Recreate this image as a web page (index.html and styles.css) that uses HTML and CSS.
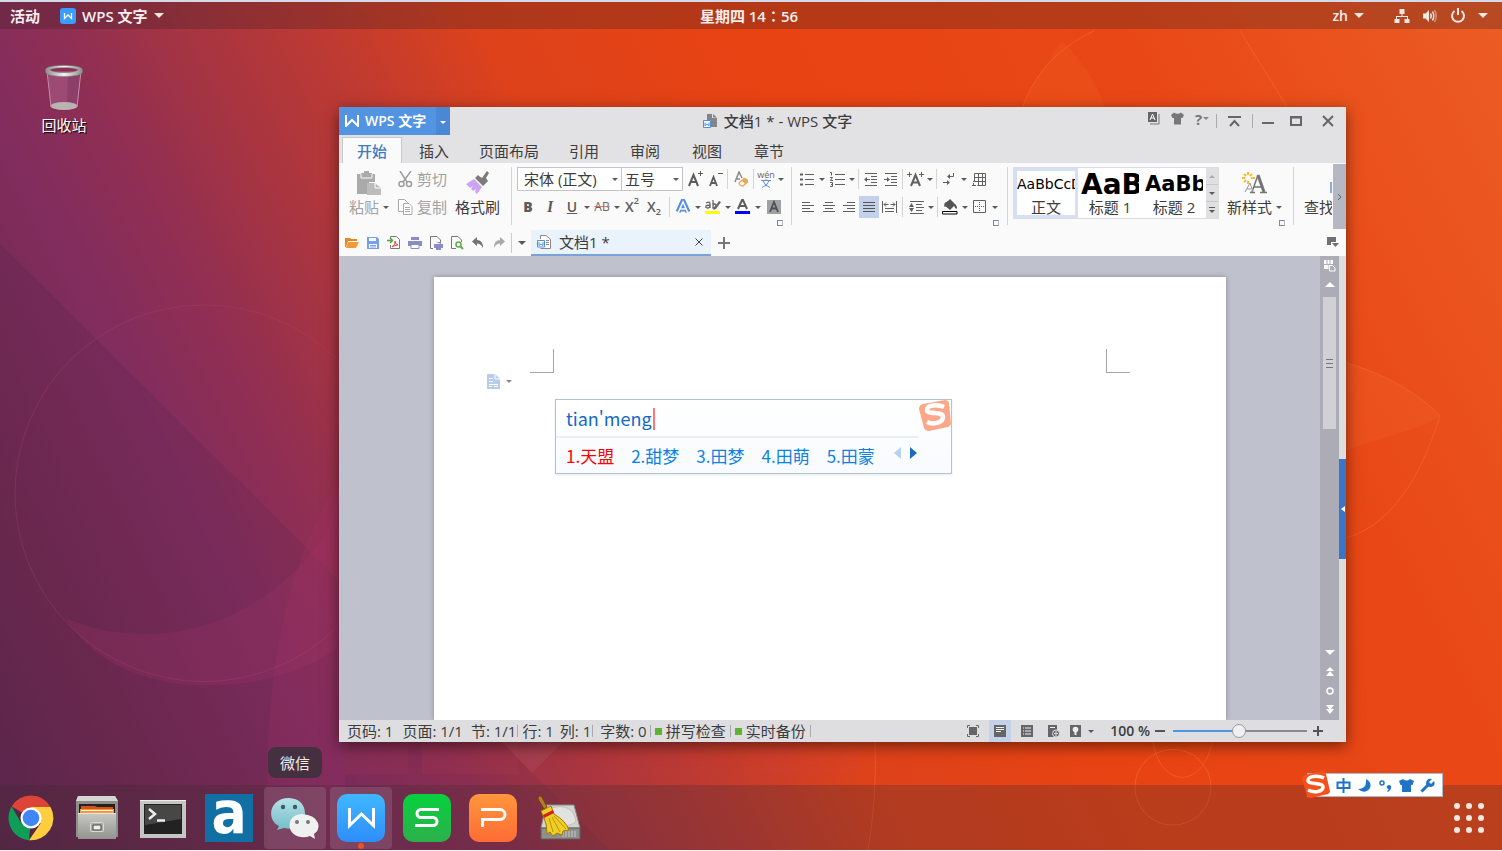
FILE: index.html
```html
<!DOCTYPE html>
<html lang="zh-CN">
<head>
<meta charset="utf-8">
<title>文档1 * - WPS 文字</title>
<link rel="stylesheet" href="styles.css">
</head>
<body class="desktop">
<svg class="wallpaper" viewBox="0 0 1502 851" preserveAspectRatio="none" aria-hidden="true">
  <defs>
    <linearGradient id="wall" gradientUnits="userSpaceOnUse" x1="-356" y1="180" x2="1193" y2="-603">
      <stop offset="0" stop-color="#5c264c"/><stop offset=".1" stop-color="#70294f"/><stop offset=".2" stop-color="#822d5e"/>
      <stop offset=".265" stop-color="#932f51"/><stop offset=".3" stop-color="#a03346"/><stop offset=".388" stop-color="#be3a32"/>
      <stop offset=".47" stop-color="#dd421b"/><stop offset=".6" stop-color="#e84313"/><stop offset=".8" stop-color="#e94816"/><stop offset="1" stop-color="#ec5c24"/>
    </linearGradient>
    <linearGradient id="shade" x1="0" y1="0" x2="1" y2="0"><stop offset="0" stop-color="#4c2148" stop-opacity=".22"/><stop offset="1" stop-color="#4c2148" stop-opacity=".08"/></linearGradient>
  </defs>
  <rect width="1502" height="851" fill="url(#wall)"/>
  <path d="M0 242L610 851H0z" fill="url(#shade)"/>
  <path d="M65 618C150 655 260 630 325 535L345 470V640C300 690 130 720 65 618z" fill="#a8356b" fill-opacity=".2"/>
  <path d="M345 470C280 570 262 690 268 851H345z" fill="#a8306b" fill-opacity=".2"/>
  <circle cx="204" cy="493" r="189" fill="none" stroke="#b5476a" stroke-opacity=".3"/>
  <path d="M345 740V775H408V740zM422 740V775H518V740zM760 740V775H860V740z" fill="#d04050" fill-opacity=".1"/>
  <path d="M500 740L532 774L565 740z" fill="#fff" fill-opacity=".05"/>
  <path d="M1062 40C1040 70 1028 90 1022 107H1106C1095 80 1080 55 1062 40z" fill="#ff7a30" fill-opacity=".12"/>
  <path d="M1022 107C1035 70 1060 45 1094 29M1240 29L1288 107M1346 362C1390 375 1420 395 1440 415C1420 480 1390 525 1346 538M875 742Q877 800 868 851M1153 742C1160 790 1204 790 1212 742" fill="none" stroke="#ff8a3c" stroke-opacity=".3"/>
  <path d="M1346 362C1390 375 1420 395 1440 415C1420 430 1390 434 1346 450z" fill="#ff8a50" fill-opacity=".1"/>
  <circle cx="1173" cy="788" r="38" fill="none" stroke="#ff8a3c" stroke-opacity=".35"/>
</svg>

<header class="topbar">
  <div class="topbar-side">
    <button class="panel-btn">活动</button>
    <button class="panel-btn app-menu">
      <svg width="16" height="16" viewBox="0 0 16 16"><rect width="16" height="16" rx="3" fill="#3a9dfc"/><path d="M4.500 5V10.500L8 7L11.500 10.500V5" fill="none" stroke="#fff" stroke-width="1.300"/></svg>
      WPS 文字 <i class="tri tri-lg"></i></button>
  </div>
  <button class="panel-btn clock">星期四 14∶56</button>
  <div class="topbar-side topbar-right">
    <button class="panel-btn lang">zh <i class="tri tri-lg"></i></button>
    <button class="panel-btn tray" aria-label="系统">
      <svg width="16" height="16" viewBox="0 0 16 16" fill="#f1e8e4"><path d="M5.500 1h5v5H8.500v2H14v3H15.500v4H10.500V11H13V9H3v2H5.500v4H.5V11H2V8H7.500V6H5.500z"/></svg>
      <svg width="16" height="16" viewBox="0 0 16 16"><path d="M1 5.500H3.500L7 2V14L3.500 10.500H1z" fill="#f1e8e4"/><path d="M8.500 5.500Q10 8 8.500 10.500M10.500 3.500Q13 8 10.500 12.500" stroke="#f1e8e4" stroke-width="1.500" fill="none"/><path d="M12.500 2Q16 8 12.500 14" stroke="#f1e8e4" stroke-opacity=".45" stroke-width="1.500" fill="none"/></svg>
      <svg width="16" height="16" viewBox="0 0 16 16" fill="none" stroke="#f1e8e4" stroke-width="2"><path d="M4.500 3A6 6 0 1 0 11.500 3M8 0V7"/></svg>
      <i class="tri tri-lg"></i></button>
  </div>
</header>

<main class="space">
  <a class="trash" href="#trash">
    <svg width="42" height="48" viewBox="0 0 42 48">
      <defs><linearGradient id="rim" x1="0" x2="1"><stop offset="0" stop-color="#8b8c88"/><stop offset=".5" stop-color="#f3f4f0"/><stop offset="1" stop-color="#8b8c88"/></linearGradient></defs>
      <path d="M4 8L8 44Q21 49 34 44L38 8z" fill="#a04f7a" fill-opacity=".85"/><path d="M25 12L24 44Q31 45 34 43L38 10z" fill="#7c335c" fill-opacity=".5"/>
      <ellipse cx="21" cy="43" rx="13.500" ry="4" fill="#b9b4b2"/><path d="M4 8L8 44M38 8L34 44" stroke="#c78ba8" stroke-width="1" fill="none"/>
      <path fill-rule="evenodd" d="M2.500 6.500C2.500 1 39.500 1 39.500 6.500V9C39.500 15 2.500 15 2.500 9zM7 6.700C10 10.500 32 10.500 35 6.700C31 4 11 4 7 6.700z" fill="url(#rim)" stroke="#777" stroke-width=".5"/>
    </svg>
    <span>回收站</span>
  </a>

  <section class="window">
    <div class="titlebar">
      <div class="brand"><button class="brand-main"><svg width="14" height="12" viewBox="0 0 14 12"><path d="M1 0V11L7 5L13 11V0" fill="none" stroke="#fff" stroke-width="2"/></svg>WPS 文字</button><button class="brand-drop" aria-label="菜单"><i class="tri"></i></button></div>
      <h1 class="title"><svg width="15" height="15" viewBox="0 0 15 15"><path d="M4 0H9V4H14V13H8V6H4z" fill="#858585"/><path d="M10 0L14 3.500H10z" fill="#858585"/><path d="M.5 6.500H7.500V13.500H.5z" fill="#fff" stroke="#4a8fe0"/><path d="M2 8.500V12L4 10L6 12V8.500" fill="none" stroke="#4a8fe0"/></svg>文档1 * - WPS 文字</h1>
      <div class="win-tools">
        <button class="tool" aria-label="字体"><svg width="13" height="13" viewBox="0 0 13 13"><path d="M1 0H10V10H1z" fill="#666"/><path d="M3 12H12V2" fill="none" stroke="#777"/><path d="M3 8L5.500 2L8 8M4 6H7" stroke="#fff" fill="none"/></svg></button>
        <button class="tool" aria-label="皮肤"><svg width="13" height="13" viewBox="0 0 13 13"><path d="M3 0.500Q6.500 3 10 .5L13 3L11.500 6H10V12.500H3V6H1.500L0 3z" fill="#777"/></svg></button>
        <button class="tool help" aria-label="帮助"><b>?</b><i class="tri tri-sm"></i></button>
        <i class="vline"></i>
        <button class="tool fold" aria-label="折叠"><svg width="13" height="11" viewBox="0 0 13 11" fill="none" stroke="#666" stroke-width="2"><path d="M0 1H13M2 10L6.500 5L11 10"/></svg></button>
        <i class="vline"></i>
        <button class="tool win" aria-label="最小化"><svg width="12" height="12" viewBox="0 0 12 12"><path d="M0 8H12" stroke="#666" stroke-width="2"/></svg></button>
        <button class="tool win" aria-label="最大化"><svg width="12" height="12" viewBox="0 0 12 12"><path d="M1 2H11V10H1z" fill="none" stroke="#666" stroke-width="2"/><path d="M0 2.500H12" stroke="#666" stroke-width="2"/></svg></button>
        <button class="tool win close" aria-label="关闭"><svg width="12" height="12" viewBox="0 0 12 12"><path d="M1 1L11 11M11 1L1 11" stroke="#666" stroke-width="2"/></svg></button>
      </div>
    </div>
    <nav class="tabs">
      <button class="tab tab-on">开始</button><button class="tab">插入</button><button class="tab">页面布局</button><button class="tab">引用</button><button class="tab">审阅</button><button class="tab">视图</button><button class="tab">章节</button>
    </nav>

    <div class="ribbon">
      <div class="group clip">
        <button class="big off paste"><svg width="26" height="25" viewBox="0 0 26 25"><path d="M1 3H5V2H8V0H13V2H16V3H19V11H13V23H1z" fill="#aaa"/><path d="M5 3V7H16V3" fill="none" stroke="#fafafa"/><path d="M11 12H19L25 17V24H11z" fill="#bcbcbc"/><path d="M19 12V17H25" fill="none" stroke="#fff"/></svg><span>粘贴<i class="tri"></i></span></button>
        <div class="stack">
          <button class="line off"><svg width="15" height="17" viewBox="0 0 15 17" fill="none" stroke="#9d9d9d" stroke-width="1.500"><path d="M2 0L9 11M13 0L5 11" /><circle cx="3.500" cy="13" r="2.500"/><circle cx="11" cy="13" r="2.500"/></svg>剪切</button>
          <button class="line off"><svg width="15" height="16" viewBox="0 0 15 16" fill="#fff" stroke="#aaa"><path d="M.5 12.500V.5H6.500L9.500 3.500V12.500z"/><path d="M5.500 15.500V4.500H11L14 7.500V15.500zM7 8.500H12M7 10.500H12M7 12.500H12"/></svg>复制</button>
        </div>
        <button class="big painter"><svg width="24" height="24" viewBox="0 0 24 24"><path d="M13 5L16 7L21 0L23 2L20 7L22 10L17 15L9 7L12 4z" fill="#7b7b7b"/><path d="M8 8L16 16L11 23L9 21L10 18L7 20L5 18L7 15L4 17L0 13z" fill="#cda4f2"/></svg><span>格式刷</span></button>
      </div>
      <i class="gline"></i>
      <div class="group font-group">
        <div class="row">
          <span class="combo combo-font"><select aria-label="字体"><option>宋体 (正文)</option></select><i class="tri"></i></span><span class="combo combo-size"><select aria-label="字号"><option>五号</option></select><i class="tri"></i></span>
          <button class="c20" aria-label="增大字号"><svg width="16" height="18" viewBox="0 0 16 18"><path d="M1 16L5.500 5L10 16M2.500 12H8.500" fill="none" stroke="#5c5c5c" stroke-width="2"/><path d="M10 3.500H15M12.500 1V6" stroke="#5c5c5c"/></svg></button>
          <button class="c20" aria-label="减小字号"><svg width="16" height="18" viewBox="0 0 16 18"><path d="M2 16L5.500 7L9 16M3 13H8" fill="none" stroke="#5c5c5c" stroke-width="1.800"/><path d="M10 3.500H15" stroke="#5c5c5c"/></svg></button>
          <i class="sep"></i>
          <button class="c22" aria-label="清除格式"><svg width="15" height="16" viewBox="0 0 15 16"><path d="M1 11L5 1L8 7M3 8H6" fill="none" stroke="#888" stroke-width="1.500"/><path d="M5 12L10 7.500Q14 8 13.500 11L9 15Q5.500 15 5 12z" fill="#fff" stroke="#eaa65c" stroke-width="1.300"/><path d="M8 10L10 7.500Q14 8 13.500 11L11 13z" fill="#eaa65c"/></svg></button>
          <i class="sep"></i>
          <button class="c20 wen" aria-label="拼音指南"><small>wén</small><svg width="10" height="9" viewBox="0 0 10 9"><path d="M0 1.500H10M5 0V1.500M2 2Q4 7 9 8.500M8 2Q6 7 1 8.500" stroke="#5f8fdc" fill="none"/></svg></button><button class="arr" aria-label="更多"><i class="tri"></i></button>
        </div>
        <div class="row">
          <button class="c22 glyph"><b>B</b></button><button class="c22 glyph serif"><em>I</em></button><button class="c22 glyph"><u>U</u></button><button class="arr a8" aria-label="更多"><i class="tri"></i></button>
          <button class="c22 strike">AB</button><button class="arr a8" aria-label="更多"><i class="tri"></i></button>
          <button class="c22 glyph script">X<sup>2</sup></button><button class="c22 glyph script">X<sub>2</sub></button><i class="sep s8"></i>
          <button class="c20" aria-label="文字效果"><svg width="16" height="16" viewBox="0 0 16 16" fill="none"><path d="M3 13L8 2L13 13M5 10H11" stroke="#5a8de0" stroke-width="5" stroke-linejoin="round"/><path d="M3 14L8 3L13 14M5 10H11" stroke="#fff" stroke-width="1.500"/></svg></button><button class="arr" aria-label="更多"><i class="tri"></i></button>
          <button class="c20" aria-label="突出显示"><svg width="16" height="16" viewBox="0 0 16 16"><path d="M1 4Q5 2 5 5V9M5 6Q0 6 1 8.500Q4 10 5 7M8 1V9Q11 9 11 6Q10 4 8 6" fill="none" stroke="#666" stroke-width="1.300"/><path d="M9 9L14 2L16 3L11 10L8 11z" fill="#666"/><path d="M0 12H15V15H0z" fill="#ff0"/></svg></button><button class="arr" aria-label="更多"><i class="tri"></i></button>
          <button class="c20" aria-label="字体颜色"><svg width="16" height="16" viewBox="0 0 16 16"><path d="M3 10L7.500 0L12 10M5 7H10" fill="none" stroke="#5c5c5c" stroke-width="2"/><path d="M0 12H15V15H0z" fill="#00f"/></svg></button><button class="arr" aria-label="更多"><i class="tri"></i></button>
          <button class="c22" aria-label="字符底纹"><svg width="14" height="14" viewBox="0 0 14 14"><path d="M0 0H14V14H0z" fill="#9fa1a6"/><path d="M3 12L7 2L11 12M4.500 8.500H9.500" fill="none" stroke="#505050" stroke-width="1.800"/></svg></button>
        </div>
        <button class="launch" aria-label="字体设置"></button>
      </div>
      <i class="gline"></i>
      <div class="group para-group">
        <div class="row">
          <button class="c20" aria-label="项目符号"><svg width="15" height="15" viewBox="0 0 15 15" stroke="#606060"><path d="M5 2.500H14M5 7.500H14M5 12.500H14"/><path d="M0 2.500H3M0 7.500H3M0 12.500H3" stroke-width="2"/></svg></button><button class="arr" aria-label="更多"><i class="tri"></i></button>
          <button class="c20" aria-label="编号"><svg width="15" height="17" viewBox="0 0 15 17" stroke="#606060" fill="none"><path d="M5 3.500H15M5 8.500H15M5 13.500H15M0 1.500H1.500V4.500M0 6.500H2.500L.5 9.500H3M0 11.500H2.500V15.500H0M1 13.500H2"/></svg></button><button class="arr" aria-label="更多"><i class="tri"></i></button>
          <i class="sep"></i>
          <button class="c20" aria-label="减少缩进"><svg width="14" height="14" viewBox="0 0 14 14" stroke="#606060"><path d="M1 1.500H13M7 4.500H13M7 7.500H13M7 10.500H13M1 13.500H13M1 7.500H6"/><path d="M0 7.500L3 5V10z" fill="#606060" stroke="none"/></svg></button>
          <button class="c20" aria-label="增加缩进"><svg width="14" height="14" viewBox="0 0 14 14" stroke="#606060"><path d="M1 1.500H13M7 4.500H13M7 7.500H13M7 10.500H13M1 13.500H13M0 7.500H4"/><path d="M6 7.500L3 5V10z" fill="#606060" stroke="none"/></svg></button>
          <i class="sep"></i>
          <button class="c20" aria-label="中文版式"><svg width="17" height="16" viewBox="0 0 17 16"><path d="M4 15L8.500 4L13 15M5.500 11.500H11.500" fill="none" stroke="#606060" stroke-width="2"/><path d="M0 3.500H5M12 3.500H17M2.500 1V6M14.500 1V6" stroke="#606060" fill="none"/></svg></button><button class="arr" aria-label="更多"><i class="tri"></i></button>
          <i class="sep"></i>
          <button class="c20" aria-label="换行标记"><svg width="12" height="14" viewBox="0 0 12 14" stroke="#606060" fill="none"><path d="M10.500 1V4.500H5M0 10.500H5"/><path d="M4 4.500L7 2V7zM7 10.500L4 8V13z" fill="#606060" stroke="none"/></svg></button><button class="arr" aria-label="更多"><i class="tri"></i></button>
          <button class="c20" aria-label="表格"><svg width="15" height="15" viewBox="0 0 15 15" stroke="#606060" fill="none"><path d="M2.500 1.500H13.500V13.500H5.500M2.500 1.500V9M6.500 1.500V13.500M10.500 1.500V13.500M2.500 5.500H13.500M1 9.500H13.500M0 13.500H4M1.500 11V14"/></svg></button>
        </div>
        <div class="row">
          <button class="c22" aria-label="左对齐"><svg width="12" height="14" viewBox="0 0 12 14" stroke="#606060"><path d="M0 2.500H8M0 5.500H12M0 8.500H8M0 11.500H12"/></svg></button>
          <button class="c20" aria-label="居中"><svg width="12" height="14" viewBox="0 0 12 14" stroke="#606060"><path d="M2 2.500H10M0 5.500H12M2 8.500H10M0 11.500H12"/></svg></button>
          <button class="c20" aria-label="右对齐"><svg width="12" height="14" viewBox="0 0 12 14" stroke="#606060"><path d="M4 2.500H12M0 5.500H12M4 8.500H12M0 11.500H12"/></svg></button>
          <button class="c20 on" aria-label="两端对齐"><svg width="12" height="14" viewBox="0 0 12 14" stroke="#555"><path d="M0 2.500H12M0 5.500H12M0 8.500H12M0 11.500H12"/></svg></button>
          <button class="c20" aria-label="分散对齐"><svg width="15" height="14" viewBox="0 0 15 14" stroke="#606060" fill="none"><path d="M.5 1V13M14.500 1V13M3 8.500H12M3 11.500H12M2 4.500H6.500M8.500 4.500H13M4 2.500L2 4.500L4 6.500M11 2.500L13 4.500L11 6.500"/></svg></button>
          <i class="sep s6"></i>
          <button class="c20" aria-label="行距"><svg width="15" height="15" viewBox="0 0 15 15" stroke="#606060"><path d="M1 1.500H15M7 4.500H13M7 7.500H15M7 10.500H13M1 13.500H15"/><path d="M0 7L2.500 3L5 7zM0 8L2.500 12L5 8z" fill="#606060" stroke="none"/></svg></button><button class="arr" aria-label="更多"><i class="tri"></i></button>
          <i class="sep"></i>
          <button class="c20" aria-label="底纹"><svg width="16" height="16" viewBox="0 0 16 16"><path d="M2 6L8 0L14 6Q16 9 14 10L12 7L8 11z" fill="#555"/><path d="M3 8V4Q7 1 10 4" stroke="#555" fill="none"/><path d="M.5 12.500H15V15H.5z" fill="#fff" stroke="#000"/></svg></button><button class="arr" aria-label="更多"><i class="tri"></i></button>
          <button class="c20" aria-label="边框"><svg width="14" height="14" viewBox="0 0 14 14" fill="none" stroke="#606060"><path d="M.5 .5H12.500V12.500H.5z"/><path d="M2 6.500H12M6.500 2V12" stroke-dasharray="1 1"/></svg></button><button class="arr" aria-label="更多"><i class="tri"></i></button>
        </div>
        <button class="launch" aria-label="段落设置"></button>
      </div>
      <i class="gline"></i>
      <div class="group styles-group">
        <div class="gallery">
          <button class="style style-on"><span class="demo">AaBbCcD</span><span class="style-name">正文</span></button>
          <button class="style"><span class="demo demo-h1">AaB</span><span class="style-name">标题 1</span></button>
          <button class="style"><span class="demo demo-h2">AaBb</span><span class="style-name">标题 2</span></button>
          <div class="gal-nav"><button aria-label="上"><i class="tri tri-up"></i></button><button aria-label="下"><i class="tri"></i></button><button aria-label="全部"><i class="tri tri-bar"></i></button></div>
        </div>
        <button class="big new-style"><svg width="26" height="24" viewBox="0 0 26 24"><path d="M10 21L16 4M12 16H20M8 21.500H13M18 21.500H25" fill="none" stroke="#747474" stroke-width="1.500"/><path d="M16 4L22 21" stroke="#747474" stroke-width="3"/><path d="M3 21L8 12L11 21M5 18H9" fill="none" stroke="#999"/><path d="M6 1V4M6 10V13M0 7H3M9 7H13M2 3L4 5M10 3L8 5M2 11L4 9" stroke="#fdb92e" stroke-width="2"/></svg><span>新样式<i class="tri"></i></span></button>
        <button class="launch" aria-label="样式设置"></button>
      </div>
      <i class="gline"></i>
      <button class="find"><i class="find-mark"></i><span>查找</span></button>
      <button class="expand" aria-label="展开"><svg width="5" height="8" viewBox="0 0 5 8"><path d="M1 1L4 4L1 7" stroke="#666" fill="none"/></svg></button>
    </div>

    <div class="docbar">
      <div class="quick">
        <button aria-label="打开"><svg width="14" height="14" viewBox="0 0 14 14"><path d="M0 2H5L6 3H12V5H3L1 11H0z" fill="#e98420"/><path d="M3 6H14L11 12H1z" fill="#f79838"/></svg></button>
        <button aria-label="保存"><svg width="14" height="14" viewBox="0 0 14 14"><path d="M1 1H11L13 3V13H1z" fill="#76a1ea"/><path d="M3 2H10V5H3zM3 8H11V12H3z" fill="#fff"/><path d="M4 9.500H10M4 11H10" stroke="#76a1ea"/></svg></button>
        <button aria-label="PDF"><svg width="14" height="14" viewBox="0 0 14 14" fill="none"><path d="M3.500 3V.5H9.500L12.500 3.500V12.500H3.500V9" stroke="#777"/><path d="M0 4.500H5M3 2L5.500 4.500L3 7" stroke="#50a83c" stroke-width="1.500"/><path d="M5 11Q9 8 8 5Q8 8 11 9Q8 9 5 11" stroke="#e04444"/></svg></button>
        <button aria-label="打印"><svg width="14" height="14" viewBox="0 0 14 14"><path d="M3 1H11V4H3zM0 5H14V10H0z" fill="#8b8bc8"/><path d="M3 8.500H11V12.500H3z" fill="#fff" stroke="#8b8bc8"/></svg></button>
        <button aria-label="直接打印"><svg width="14" height="14" viewBox="0 0 14 14" fill="none"><path d="M4 12.500H1.500V.5H8L11.500 4V6" stroke="#777"/><path d="M5 8H14V12H5zM7 6H12V8M7 11H12V14H7z" fill="#8b8bc8"/></svg></button>
        <button aria-label="打印预览"><svg width="14" height="14" viewBox="0 0 14 14" fill="none"><path d="M6 12.500H1.500V.5H8L11.500 4V6" stroke="#777"/><circle cx="8.500" cy="8.500" r="2.500" stroke="#66a850" stroke-width="1.500"/><path d="M10 10L13 13" stroke="#66a850" stroke-width="2"/></svg></button>
        <button aria-label="撤销"><svg width="14" height="14" viewBox="0 0 14 14"><path d="M1 5.500L6 1V4Q12 4 12 12Q10 7.500 6 7.500V10z" fill="#737373"/></svg></button>
        <button aria-label="恢复"><svg width="14" height="14" viewBox="0 0 14 14"><path d="M13 5.500L8 1V4Q2 4 2 12Q4 7.500 8 7.500V10z" fill="#a9a9a9"/></svg></button>
      </div>
      <i class="dline"></i>
      <button class="quick-more" aria-label="更多"><i class="tri tri-md"></i></button>
      <div class="doc-tab"><svg width="14" height="14" viewBox="0 0 14 14" fill="none"><path d="M3.500 4V.5H9L13.500 4.500V13.500H3.500" stroke="#888" fill="#fff"/><path d="M9 5.500H12M9 7.500H12M9 9.500H12" stroke="#888"/><path d="M.5 5.500H7.500V12H.5z" fill="#fff" stroke="#4a8fe0"/><path d="M2 7V10.500L4 9L6 10.500V7" stroke="#4a8fe0"/></svg><span>文档1 *</span><button class="doc-close" aria-label="关闭文档"><svg width="8" height="8" viewBox="0 0 8 8"><path d="M.5 .5L7.500 7.500M7.500 .5L.5 7.500" stroke="#444"/></svg></button></div>
      <button class="doc-add" aria-label="新建"><svg width="12" height="12" viewBox="0 0 12 12"><path d="M0 6H12M6 0V12" stroke="#777" stroke-width="2"/></svg></button>
      <button class="doc-list" aria-label="文档列表"><svg width="12" height="11" viewBox="0 0 12 11"><path d="M0 0H9V5H4V8H0z" fill="#707070"/><path d="M5 6H12L8.500 10z" fill="#707070"/></svg></button>
    </div>

    <div class="work">
      <div class="canvas">
        <div class="page">
          <i class="corner corner-l"></i><i class="corner corner-r"></i>
          <button class="para-mark" aria-label="段落"><svg width="13" height="15" viewBox="0 0 13 15"><path d="M0 0H8L13 5V15H0z" fill="#b7cbea"/><path d="M8 0V5H13M2 4.500H6M2 7.500H6M2 10.500H11M2 12.500H5M7 12.500H11" fill="none" stroke="#fff"/></svg><i class="tri tri-sm"></i></button>
        </div>
      </div>
      <div class="scroll">
        <button aria-label="导航"><svg width="12" height="12" viewBox="0 0 12 12"><path d="M0 0H9V4H5V9H0z" fill="#fff"/><path d="M3 0V4M6 0V4M0 4.500H5M5 4V9" stroke="#abacb5"/><path d="M5.500 5.500H8.500L11 8V11H5.500z" fill="#abacb5" stroke="#fff"/></svg></button>
        <button aria-label="上滚"><svg width="10" height="5"><path d="M0 5L5 0L10 5z" fill="#fff"/></svg></button>
        <div class="thumb"><i></i><i></i><i></i></div>
        <span class="scroll-fill"></span>
        <button aria-label="下滚"><svg width="10" height="5"><path d="M0 0H10L5 5z" fill="#fff"/></svg></button>
        <button aria-label="上一页"><svg width="8" height="9"><path d="M0 4L4 0L8 4zM0 9L4 4L8 9z" fill="#fff"/></svg></button>
        <button aria-label="选择对象"><svg width="8" height="8"><circle cx="4" cy="4" r="3" fill="none" stroke="#fff" stroke-width="1.500"/></svg></button>
        <button aria-label="下一页"><svg width="8" height="9"><path d="M0 0H8L4 5zM0 4H8L4 9z" fill="#fff"/></svg></button>
      </div>
      <div class="edge"><button class="edge-tab" aria-label="任务窗格"><svg width="4" height="6"><path d="M4 0V6L0 3z" fill="#fff"/></svg></button></div>
    </div>

    <footer class="status">
      <span class="st st-a">页码: 1</span><span class="st st-b">页面: 1/1</span><span class="st">节: 1/1</span><i class="sline"></i><span class="st st-c">行: 1</span><span class="st">列: 1</span><i class="sline"></i><span class="st st-d">字数: 0</span><i class="sline"></i>
      <button class="st st-btn"><i class="led"></i>拼写检查</button><i class="sline"></i><button class="st st-btn"><i class="led"></i>实时备份</button><i class="sline"></i>
      <div class="views">
        <button aria-label="全屏"><svg width="12" height="12" viewBox="0 0 12 12"><path d="M2 2H10V10H2z" fill="#666"/><path d="M.5 3V.5H3M9 .5H11.500V3M11.500 9V11.500H9M3 11.500H.5V9" stroke="#666" fill="none"/></svg></button>
        <button class="on" aria-label="页面视图"><svg width="12" height="12" viewBox="0 0 12 12"><path d="M0 0H12V12H0z" fill="#666"/><path d="M2 2.500H10M2 4.500H10M2 6.500H7" stroke="#eee"/></svg></button>
        <button aria-label="大纲"><svg width="12" height="12" viewBox="0 0 12 12"><path d="M0 0H12V12H0z" fill="#666"/><path d="M2 3H3M4 3H10M2 6H3M4 6H10M2 9H3M4 9H10" stroke="#eee"/></svg></button>
        <button aria-label="Web 版式"><svg width="12" height="12" viewBox="0 0 12 12"><path d="M0 0H9V12H0z" fill="#666"/><path d="M2 2.500H7" stroke="#eee"/><circle cx="8" cy="8.500" r="3.500" fill="#666" stroke="#ddd"/><path d="M6 8.500H10M8 6V11" stroke="#ddd"/></svg></button>
        <button class="eye" aria-label="护眼"><svg width="12" height="12" viewBox="0 0 12 12"><path d="M0 0H11V12H0z" fill="#666"/><circle cx="5.500" cy="4.500" r="2.800" fill="#eee"/><path d="M4.500 7H6.500V10H4.500z" fill="#eee"/></svg><i class="tri"></i></button>
      </div>
      <label class="pct" for="zoom">100 %</label>
      <button class="zbtn" aria-label="缩小"><svg width="10" height="10"><path d="M0 5H10" stroke="#555" stroke-width="2"/></svg></button>
      <input class="zoom" id="zoom" type="range" min="0" max="100" value="49">
      <button class="zbtn" aria-label="放大"><svg width="10" height="10"><path d="M0 5H10M5 0V10" stroke="#555" stroke-width="2"/></svg></button>
    </footer>

    <div class="ime">
      <div class="ime-top"><input class="ime-input" value="tian'meng" aria-label="拼音"></div>
      <div class="ime-list"><button class="cand cand-on">1.天盟</button><button class="cand">2.甜梦</button><button class="cand">3.田梦</button><button class="cand">4.田萌</button><button class="cand">5.田蒙</button><button class="pg" aria-label="上页"><svg width="7" height="12"><path d="M7 0V12L0 6z" fill="#b5d3ee"/></svg></button><button class="pg" aria-label="下页"><svg width="7" height="12"><path d="M0 0V12L7 6z" fill="#1b6cc0"/></svg></button></div>
      <svg class="ime-logo" width="32" height="31" viewBox="0 0 32 31"><path d="M4 4L26 0Q29 0 30 3L32 24Q31 26 29 27L10 31Q6 31 5 28L0 9Q0 5 4 4z" fill="#fba88a"/><path d="M25 7C18 4 8 5 8 10C8 15 24 11 24 17C24 23 14 25 8 22" fill="none" stroke="#fff" stroke-width="4.500"/></svg>
    </div>
  </section>

  <div class="imebar">
    <svg class="imebar-logo" width="28" height="28" viewBox="0 0 28 28"><path d="M3 4L20 0Q23 0 24 3L28 20Q28 22 26 23L9 27Q6 27 5 25L0 8Q0 5 3 4z" fill="#f4511c"/><path d="M22 7C16 4 6 5 6 9.500C6 14 21 11 21 16C21 21 12 22 6 19" fill="none" stroke="#fff" stroke-width="3.500"/></svg>
    <button aria-label="中文"><svg width="15" height="15" viewBox="0 0 15 15"><path d="M1.500 4.500H13.500V10H1.500zM7.500 0V15" fill="none" stroke="#1f74c8" stroke-width="2"/></svg></button>
    <button aria-label="半角"><svg width="15" height="15" viewBox="0 0 15 15"><path d="M9 1Q15 4 13 10Q8 17 1 11Q10 11 9 1z" fill="#1f74c8"/></svg></button>
    <button aria-label="标点"><svg width="15" height="15" viewBox="0 0 15 15"><circle cx="4" cy="5" r="2" fill="none" stroke="#1f74c8" stroke-width="1.500"/><path d="M9 8Q11 6 13 8Q14 11 10 14L9 13Q11 12 10.500 11Q8 10 9 8z" fill="#1f74c8"/></svg></button>
    <button aria-label="皮肤"><svg width="15" height="15" viewBox="0 0 15 15"><path d="M4 1Q7.500 4 11 1L15 3L13.500 7H12V14H3V7H1.500L0 3z" fill="#1f74c8"/></svg></button>
    <button aria-label="工具"><svg width="15" height="15" viewBox="0 0 15 15"><path d="M1.500 13.500L8 7" stroke="#1f74c8" stroke-width="3"/><path d="M12 1L9 4L11 6L14 3Q16 8 11 9Q7 9 6 6Q6 0 12 1z" fill="#1f74c8"/></svg></button>
  </div>
  <div class="tip">微信</div>
</main>

<nav class="dock">
  <a href="#chrome" class="app" aria-label="Chrome"><svg width="48" height="48" viewBox="0 0 48 48"><path d="M24 24L4.700 12.500A22.300 22.300 0 0 1 43.500 13H24z" fill="#db4437"/><path d="M24 24L22 46.200A22.300 22.300 0 0 1 4.700 12.500L14.500 29.500z" fill="#0f9d58"/><path d="M24 13H43.500A22.300 22.300 0 0 1 22 46.200L33.500 29.500z" fill="#ffcd40"/><circle cx="24" cy="24" r="10.500" fill="#fff"/><circle cx="24" cy="24" r="8.300" fill="#4285f4"/></svg></a>
  <a href="#files" class="app" aria-label="文件"><svg width="48" height="48" viewBox="0 0 48 48"><defs><linearGradient id="cab" x1="0" y1="0" x2="0" y2="1"><stop offset="0" stop-color="#c8c8c4"/><stop offset="1" stop-color="#92928e"/></linearGradient></defs><path d="M5 2H42L45 7V43H3V7z" fill="#8e8e8a"/><path d="M5 2H42L45 7H3z" fill="#d5d5d1"/><path d="M6 10H42V20H6z" fill="#222"/><path d="M8 12H22L24 13H40V20H8z" fill="#d5521a"/><path d="M7 15H41V20H7z" fill="#f49a3e"/><path d="M8 16.500H40" stroke="#fff0d8"/><path d="M5 19H43V45H5z" fill="url(#cab)"/><path d="M5 19.500H43" stroke="#e6e6e3"/><rect x="17.500" y="28.500" width="13" height="9" rx="1" fill="#a9a9a5" stroke="#dadad7"/><path d="M20 31H28V36H20z" fill="#eee" stroke="#444"/></svg></a>
  <a href="#terminal" class="app" aria-label="终端"><svg width="48" height="48" viewBox="0 0 48 48"><path d="M1 6H47V44H1z" fill="#c5c5c3"/><path d="M1 6.500H47" stroke="#eee"/><path d="M5 10H43V40H5z" fill="#222"/><path d="M6 11H42V25L6 31z" fill="#464746"/><path d="M10 15L16 20L10 25M18 26.500H26" stroke="#eee" stroke-width="2.500" fill="none"/></svg></a>
  <a href="#a" class="app app-a"><span>a</span></a>
  <a href="#wechat" class="app app-on" aria-label="微信"><svg width="48" height="48" viewBox="0 0 48 48"><defs><linearGradient id="wx" x1="0" y1="0" x2="0" y2="1"><stop offset="0" stop-color="#b4e2e6"/><stop offset="1" stop-color="#74bcca"/></linearGradient></defs><path d="M18 4C-2 4-5 26 8 32L6 36L13 34Q34 38 34 19Q33 5 18 4z" fill="url(#wx)"/><circle cx="12" cy="13" r="2.200" fill="#3a5a68"/><circle cx="24" cy="13" r="2.200" fill="#3a5a68"/><path d="M31 20C15 20 14 41 30 43Q34 44 39 42L44 45L43 40Q49 36 47 29Q44 21 31 20z" fill="#eef1ef"/><circle cx="26" cy="28" r="2" fill="#777"/><circle cx="37" cy="28" r="2" fill="#777"/></svg></a>
  <a href="#writer" class="app app-on app-run" aria-label="WPS 文字"><svg width="48" height="48" viewBox="0 0 48 48"><defs><linearGradient id="bl" x1="0" y1="0" x2="0" y2="1"><stop offset="0" stop-color="#3fb8ff"/><stop offset="1" stop-color="#2f8dfc"/></linearGradient></defs><rect width="48" height="48" rx="10" fill="url(#bl)"/><path d="M12.500 14V31.500L24.500 20L36.500 31.500V14" fill="none" stroke="#fff" stroke-width="3"/></svg></a>
  <a href="#sheet" class="app" aria-label="WPS 表格"><svg width="48" height="48" viewBox="0 0 48 48"><defs><linearGradient id="gr" x1="0" y1="0" x2="0" y2="1"><stop offset="0" stop-color="#06d13d"/><stop offset="1" stop-color="#2cb04c"/></linearGradient></defs><rect width="48" height="48" rx="10" fill="url(#gr)"/><path d="M36 15.500H18A4 4 0 0 0 18 23.500H30A4 4 0 0 1 30 31.500H12" fill="none" stroke="#fff" stroke-width="3"/></svg></a>
  <a href="#slides" class="app" aria-label="WPS 演示"><svg width="48" height="48" viewBox="0 0 48 48"><defs><linearGradient id="or" x1="0" y1="0" x2="0" y2="1"><stop offset="0" stop-color="#ff963c"/><stop offset="1" stop-color="#ff6c35"/></linearGradient></defs><rect width="48" height="48" rx="10" fill="url(#or)"/><path d="M12 15.500H31A5 5 0 0 1 31 25.500H13.500V33" fill="none" stroke="#fff" stroke-width="3"/></svg></a>
  <a href="#clean" class="app" aria-label="清理"><svg width="48" height="48" viewBox="0 0 48 48"><path d="M11 11H39L45 34H6z" fill="#d3d3d1" stroke="#888"/><path d="M16 14Q38 8 41 28Q32 34 20 32" fill="#e2e2e0" stroke="#c0c0be"/><path d="M6 34H45V45H6z" fill="#8f8f8c" stroke="#5e5e5b"/><path d="M28 37V43M31 37V43M34 37V43M37 37V43M40 37V43" stroke="#ccc"/><path d="M3 5Q3 0 7 3L12 13L9 15z" fill="#b97a2a" stroke="#70450f"/><path d="M6 17L16 12L19 20Q31 27 34 36L28 37L27 41L22 39L18 42L15 38L12 40Q12 30 9 24z" fill="#f0cf25" stroke="#9d7c0a"/><path d="M8 21L18 16L19 19L9 24z" fill="#d32222"/><path d="M14 24L18 38M17 23L25 38M19 22L31 35" stroke="#b8940f" fill="none"/></svg></a>
  <button class="app grid-btn" aria-label="显示应用程序"><svg width="32" height="32" viewBox="0 0 32 32" fill="#f1e8e4"><circle cx="4" cy="4" r="3"/><circle cx="16" cy="4" r="3"/><circle cx="28" cy="4" r="3"/><circle cx="4" cy="16" r="3"/><circle cx="16" cy="16" r="3"/><circle cx="28" cy="16" r="3"/><circle cx="4" cy="28" r="3"/><circle cx="16" cy="28" r="3"/><circle cx="28" cy="28" r="3"/></svg></button>
</nav>
</body>
</html>
```

FILE: styles.css
```css
* { box-sizing: border-box; }
html, body { height: 100%; }
body, button, input, select {
  margin: 0;
  font: 15px/20px "Open Sans", "Noto Sans CJK SC", sans-serif;
  color: #3c3c3c;
}
button { padding: 0; border: 0; background: none; flex: none; white-space: nowrap; }
a { color: inherit; text-decoration: none; }
svg { display: block; flex: none; }

.desktop {
  position: relative;
  display: flex;
  flex-direction: column;
  min-height: 100vh;
  overflow: hidden;
  border-top: 2px solid #d5dae8;
  border-bottom: 1px solid #f0eef0;
}
.wallpaper { position: absolute; inset: 0; width: 100%; height: 100%; z-index: -1; }

.tri {
  display: inline-block;
  flex: none;
  border: 3px solid transparent;
  border-top-color: #5a5a5a;
  border-bottom: 0;
}
.tri-lg { border-width: 5px; border-bottom: 0; border-top-color: #f1e8e4; }
.tri-md { border-width: 4px; border-bottom: 0; }
.tri-sm { border-top-color: #888; }
.tri-up { border: 3px solid transparent; border-top: 0; border-bottom-color: #aaa; }

/* Top panel */
.topbar {
  display: grid;
  grid-template-columns: 1fr auto 1fr;
  height: 27px;
  flex: none;
  padding: 0 14px 0 10px;
  background: rgba(50, 30, 32, .28);
}
.topbar-side { display: flex; align-items: center; gap: 20px; }
.topbar-right { justify-content: flex-end; gap: 30px; }
.panel-btn { display: flex; align-items: center; gap: 6px; color: #f4efee; font-weight: 600; }
.lang { font-size: 14px; }
.tray { gap: 12px; }

/* Desktop surface */
.space { position: relative; flex: 1; }
.trash {
  position: absolute;
  left: 34px;
  top: 34px;
  width: 60px;
  display: flex;
  flex-direction: column;
  align-items: center;
  gap: 4px;
  color: #fff;
  text-shadow: 1px 1px 1px #000;
}

/* Window */
.window {
  position: absolute;
  left: 339px;
  right: 156px;
  top: 78px;
  bottom: 43px;
  display: flex;
  flex-direction: column;
  background: #fafafa;
  box-shadow: 0 4px 14px rgba(0, 0, 0, .5);
}
.titlebar {
  display: grid;
  grid-template-columns: 1fr auto 1fr;
  align-items: center;
  height: 28px;
  flex: none;
  background: #e2e2e4;
}
.brand { display: flex; align-self: stretch; }
.brand-main { display: flex; align-items: center; gap: 6px; width: 97px; padding-left: 6px; background: #5294e2; color: #fff; font-size: 14px; font-weight: 600; }
.brand-drop { width: 14px; background: #4a88d4; }
.brand .tri { border-top-color: #fff; vertical-align: middle; }
.title { display: flex; gap: 6px; align-items: center; margin: 0; padding-right: 130px; font-size: 15px; font-weight: 500; }
.win-tools { display: flex; align-items: center; justify-content: flex-end; margin-left: -130px; }
.tool { display: flex; align-items: center; justify-content: center; width: 24px; height: 28px; padding-bottom: 5px; }
.help { gap: 1px; width: 26px; }
.help b { color: #777; }
.fold { width: 33px; padding-bottom: 0; }
.vline { width: 1px; height: 14px; margin: 0 1px; background: #aaa; flex: none; }
.win { width: 28px; padding-bottom: 0; }
.close { width: 36px; }

.tabs { display: flex; height: 28px; flex: none; padding: 2px 0 0 3px; background: #e2e2e4; }
.tab { padding: 1px 15px 0; }
.tab:nth-child(n+5) { padding: 1px 16px 0; }
.tab-on { border: 1px solid #c8c8ca; border-bottom: 0; background: #fafafa; color: #3e7ac4; font-weight: 500; padding: 0 14px; margin-right: 2px; }

/* Ribbon */
.ribbon { display: flex; height: 66px; flex: none; overflow: hidden; background: #fafafa; }
.group { position: relative; display: flex; flex: none; height: 66px; }
.gline { width: 1px; height: 58px; margin-top: 4px; background: #d4d4d6; flex: none; }
.big { display: flex; flex-direction: column; align-items: center; justify-content: space-between; padding: 8px 0 12px; line-height: 20px; }
.big span { display: flex; align-items: center; gap: 4px; }
.off { color: #a2a2a2; }
.clip { width: 172px; padding-left: 10px; }
.stack { display: flex; flex-direction: column; padding: 2px 8px 0 9px; }
.line { display: flex; align-items: center; gap: 4px; height: 28px; }
.font-group, .para-group { flex-direction: column; padding: 2px 5px 0 5px; }
.para-group { padding-right: 7px; }
.row { display: flex; align-items: center; height: 28px; }
.row button { display: flex; align-items: center; justify-content: center; height: 22px; }
.row .c20 { width: 20px; }
.row .c22 { width: 22px; }
.row .arr { width: 10px; }
.row .a8 { width: 8px; }
.row .on { background: #c3d2ea; }
.sep { width: 1px; height: 20px; margin: 0 2px 0 1px; background: #d4d4d6; flex: none; }
.s6 { margin: 0 3px 0 3px; }
.s8 { margin: 0 3px 0 4px; }
.combo { position: relative; display: flex; align-items: center; height: 24px; border: 1px solid #c4c4c6; background: #fff; }
.combo-font { width: 105px; }
.combo-size { width: 62px; margin-left: -1px; margin-right: 3px; }
.combo select { appearance: none; width: 100%; height: 22px; padding: 0 0 0 6px; border: 0; background: none; }
.combo-size select { padding-left: 3px; }
.combo .tri { position: absolute; right: 3px; top: 10px; }
.glyph { font-size: 14px; color: #5c5c5c; font-weight: 600; }
.serif { font-family: "Liberation Serif", serif; font-size: 16px; }
.script sup, .script sub { font-size: 9px; line-height: 9px; align-self: flex-start; }
.script sub { align-self: flex-end; margin-bottom: 2px; }
.row .strike { font-size: 12px; color: #666; text-decoration: line-through #e66; }
.row .wen { flex-direction: column; }
.wen small { font-size: 9px; line-height: 9px; color: #666; }
.launch { position: absolute; right: 8px; bottom: 3px; width: 6px; height: 6px; border: 1px solid #7a86a4; border-right-color: #b4bccc; }
.styles-group { width: 285px; padding-left: 5px; }
.gallery { display: flex; width: 206px; height: 52px; margin-top: 4px; border: 1px solid #dcdcde; background: #fff; }
.style { display: flex; flex-direction: column; align-items: center; width: 64px; padding: 3px 3px 0; justify-content: flex-start; }
.style-on { box-shadow: inset 0 0 0 3px #d5e0f6; }
.demo { display: block; width: 58px; height: 27px; overflow: hidden; font: 14px/27px "DejaVu Sans", sans-serif; color: #000; text-align: left; flex: none; }
.demo-h1 { font-size: 28px; font-weight: 700; }
.demo-h2 { font-size: 21px; font-weight: 700; }
.style-name { line-height: 18px; }
.gal-nav { display: flex; flex-direction: column; width: 12px; gap: 1px; background: #c8c8ca; }
.gal-nav button { display: grid; place-items: center; flex: 1; background: #e0e0e2; }
.tri-bar { position: relative; margin-top: 3px; }
.tri-bar::before { content: ""; position: absolute; left: -3px; top: -6px; width: 6px; height: 1px; background: #5a5a5a; }
.new-style { margin-left: 8px; }
.find { position: relative; display: flex; align-items: flex-start; width: 39px; padding: 34px 0 0 10px; }
.find span { width: 28px; overflow: hidden; }
.find-mark { position: absolute; right: 1px; top: 19px; width: 2px; height: 11px; background: #8aaee0; }
.expand { display: grid; place-items: center; width: 13px; margin: 1px 0 0 auto; background: #b5b8c2; }

/* Document tabs */
.docbar { display: flex; align-items: center; height: 27px; flex: none; }
.quick { display: flex; gap: 7px; padding-left: 6px; }
.dline { width: 1px; height: 20px; margin-left: 5px; background: #ccc; flex: none; }
.quick-more { display: grid; place-items: center; width: 19px; height: 20px; }
.doc-tab { display: flex; align-items: center; gap: 8px; width: 180px; height: 26px; padding: 0 8px 0 6px; background: #eaf2fb; border-bottom: 2px solid #78a3d8; align-self: flex-end; }
.doc-close { margin-left: auto; }
.doc-add { margin-left: 7px; }
.doc-list { margin: 0 7px 0 auto; }

/* Work area */
.work { display: flex; flex: 1; min-height: 0; }
.canvas { flex: 1; display: flex; padding: 21px 94px 0 95px; background: #bfc2cc; overflow: hidden; }
.page { position: relative; flex: 1; display: flex; justify-content: space-between; padding: 72px 96px 0; background: #fff; box-shadow: 0 0 5px #878b98; }
.corner { width: 24px; height: 24px; border-bottom: 1px solid #a5a5a5; }
.corner-l { border-right: 1px solid #a5a5a5; }
.corner-r { border-left: 1px solid #a5a5a5; }
.para-mark { position: absolute; left: 53px; top: 97px; display: flex; align-items: center; gap: 6px; }
.scroll { display: flex; flex-direction: column; align-items: center; width: 19px; padding-bottom: 1px; background: #abacb5; }
.scroll button { display: grid; place-items: center; width: 19px; height: 19px; }
.thumb { display: flex; flex-direction: column; align-items: center; justify-content: center; gap: 3px; width: 13px; height: 132px; margin-top: 3px; background: #d1d1d5; }
.thumb i { width: 7px; height: 1px; background: #777; }
.scroll-fill { flex: 1; }
.edge { display: flex; align-items: center; width: 7px; padding-top: 42px; background: #dedee0; }
.edge-tab { display: grid; place-items: center; width: 7px; height: 100px; background: #3a76c8; }

/* Status bar */
.status { display: flex; align-items: center; height: 22px; flex: none; padding: 0 23px 0 8px; background: #dedee0; }
.st { display: flex; align-items: center; gap: 4px; line-height: 20px; }
.st-a { margin-right: 9px; }
.st-b { margin-right: 8px; }
.st-c { margin-right: 6px; }
.st-d { margin: 0 2px 0 3px; }
.st-btn { margin-right: 3px; }
.sline { width: 1px; height: 12px; margin: 0 4px 0 1px; background: #aaa; flex: none; }
.led { width: 7px; height: 7px; background: #5cb531; }
.views { display: flex; align-items: center; gap: 5px; margin: 0 16px 0 auto; }
.views button { display: grid; place-items: center; width: 22px; height: 22px; }
.views .on { background: #c3d2ea; }
.views .eye { display: flex; align-items: center; justify-content: space-between; width: 24px; }
.pct { font-weight: 600; font-size: 14px; margin-right: 5px; }
.zoom { appearance: none; width: 134px; height: 16px; margin: 0 6px 0 8px; background: linear-gradient(90deg, #5294e2 50%, #8a8a8c 50%) center / 100% 2px no-repeat; }
.zoom::-webkit-slider-thumb { appearance: none; width: 14px; height: 14px; border: 1px solid #999; border-radius: 50%; background: #f0f0f0; }

/* Candidate window */
.ime {
  position: absolute;
  left: 216px;
  top: 292px;
  width: 397px;
  height: 75px;
  border: 1px solid #b5c2cf;
  background: linear-gradient(#fff, #f8fbfe);
  box-shadow: 0 1px 2px rgba(120, 140, 160, .2);
}
.ime-top { height: 38px; width: 362px; padding: 8px 0 0 10px; border-bottom: 2px solid #e9eef4; }
.ime-input { display: block; width: 89px; height: 22px; padding: 0 0 2px; border: 0; border-right: 2px solid #f77; background: none; color: #1468c4; font: 18px/20px "Noto Sans CJK SC", sans-serif; }
.ime-list { display: flex; align-items: center; gap: 17px; padding-left: 10px; height: 36px; }
.cand { font: 17px/24px "Noto Sans CJK SC", sans-serif; color: #0f82e0; }
.cand-on { color: #f00; }
.pg { margin: 0 -4px 6px 2px; }
.pg + .pg { margin-left: -4px; }
.ime-logo { position: absolute; right: 0; top: 0; }

/* Floating input-method bar */
.imebar {
  position: absolute;
  right: 59px;
  bottom: -12px;
  z-index: 2;
  display: flex;
  align-items: center;
  gap: 6px;
  height: 24px;
  padding: 0 7px 0 24px;
  border: 1px solid #a8bccb;
  background: #fff;
}
.imebar-logo { margin-left: -30px; }

.tip {
  position: absolute;
  left: 268px;
  bottom: 7px;
  padding: 6px 12px 5px;
  border-radius: 8px;
  background: #45303f;
  color: #f1e8e4;
}

/* Dock */
.dock { position: relative; display: flex; align-items: center; gap: 4px; height: 65px; flex: none; background: rgba(66, 44, 52, .28); }
.app { display: grid; place-items: center; width: 62px; height: 62px; border-radius: 4px; }
.app-on { background: rgba(255, 255, 255, .12); }
.app-run { position: relative; }
.app-run::after { content: ""; position: absolute; left: 28px; bottom: 0; width: 6px; height: 6px; border-radius: 50%; background: #e95420; }
.app-a span { display: grid; place-items: center; width: 48px; height: 48px; background: #116fa3; color: #fff; font: 700 58px/36px "Liberation Sans Narrow", "DejaVu Sans Condensed", "Open Sans", sans-serif; padding-bottom: 10px; }
.grid-btn { margin-left: auto; margin-right: 2px; }
```
